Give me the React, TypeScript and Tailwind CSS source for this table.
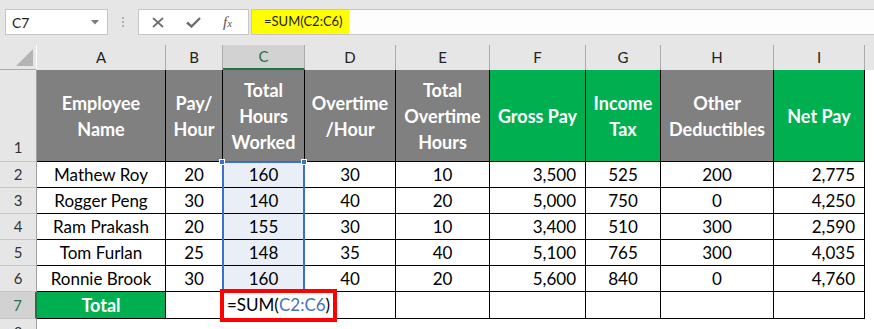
import React from 'react';

const headerCells = [
  { label: ['Employee', 'Name'], bg: 'bg-[#808080]' },
  { label: ['Pay/', 'Hour'], bg: 'bg-[#808080]' },
  { label: ['Total', 'Hours', 'Worked'], bg: 'bg-[#808080]' },
  { label: ['Overtime', '/Hour'], bg: 'bg-[#808080]' },
  { label: ['Total', 'Overtime', 'Hours'], bg: 'bg-[#808080]' },
  { label: ['Gross Pay'], bg: 'bg-[#00b050]' },
  { label: ['Income', 'Tax'], bg: 'bg-[#00b050]' },
  { label: ['Other', 'Deductibles'], bg: 'bg-[#808080]' },
  { label: ['Net Pay'], bg: 'bg-[#00b050]' },
];

const rows = [
  ['Mathew Roy', '20', '160', '30', '10', '3,500', '525', '200', '2,775'],
  ['Rogger Peng', '30', '140', '40', '20', '5,000', '750', '0', '4,250'],
  ['Ram Prakash', '20', '155', '30', '10', '3,400', '510', '300', '2,590'],
  ['Tom Furlan', '25', '148', '35', '40', '5,100', '765', '300', '4,035'],
  ['Ronnie Brook', '30', '160', '40', '20', '5,600', '840', '0', '4,760'],
];

const letters = ['A', 'B', 'C', 'D', 'E', 'F', 'G', 'H', 'I'];

const FormulaBar: React.FC = () => (
  <div className="h-[45px] bg-[#e6e6e6] pt-[9px] flex items-start">
    <div className="ml-[5px] w-[103px] h-[26px] bg-white border border-[#c6c6c6] flex items-center justify-between pl-[6px] pr-[8px] text-[14px] text-[#222]">
      <span>C7</span>
      <svg width="8" height="5" viewBox="0 0 8 5">
        <path d="M0 0 L8 0 L4 4.5 Z" fill="#7a7a7a" />
      </svg>
    </div>
    <div className="w-[30px] h-[26px] flex flex-col items-center justify-center gap-[2px]">
      <span className="w-[2px] h-[2px] bg-[#b0b0b0]" />
      <span className="w-[2px] h-[2px] bg-[#b0b0b0]" />
      <span className="w-[2px] h-[2px] bg-[#b0b0b0]" />
    </div>
    <div className="w-[111px] h-[26px] bg-white border border-[#c6c6c6] flex items-center pl-[13px] gap-[22px]">
      <svg width="12" height="11" viewBox="0 0 12 11">
        <path d="M1 1 L11 10 M11 1 L1 10" stroke="#6e6e6e" strokeWidth="1.7" fill="none" />
      </svg>
      <svg width="15" height="11" viewBox="0 0 15 11">
        <path d="M1 5.5 L5.5 9.5 L14 1" stroke="#6e6e6e" strokeWidth="2.4" fill="none" />
      </svg>
      <span className="font-['Liberation_Serif',serif] italic text-[15px] text-[#555] leading-none">
        f<span className="text-[11px]">x</span>
      </span>
    </div>
    <div className="ml-[2px] flex-1 h-[26px] bg-[#fdfdfd] border-y border-l border-[#c6c6c6] flex">
      <div className="w-[97px] h-full bg-[#ffff00] pl-[12px] flex items-center text-[13px] text-[#222]">
        =SUM(C2:C6)
      </div>
    </div>
  </div>
);

const App: React.FC = () => {
  return (
    <div className="w-[874px] h-[329px] overflow-hidden bg-white font-['Lato','Noto_Sans',sans-serif]">
      <FormulaBar />
      <div className="relative grid grid-cols-[37px_129px_57px_82px_91px_94px_96px_75px_113px_91px_1fr] grid-rows-[25px_92px_26px_26px_26px_26px_26px_27px_11px] text-[17px]">
        {/* column headers */}
        <div className="bg-[#e6e6e6] border-r border-white border-b border-b-[#ababab] relative">
          <svg className="absolute left-[16px] top-[4px]" width="17" height="17" viewBox="0 0 17 17">
            <path d="M17 0 L17 17 L0 17 Z" fill="#b4b4b4" />
          </svg>
        </div>
        {letters.map((l) =>
          l === 'C' ? (
            <div key={l} className="bg-[#d2d2d2] border-r border-[#ababab] border-b-2 border-b-[#217346] flex items-center justify-center text-[#217346] text-[15px]">
              {l}
            </div>
          ) : (
            <div key={l} className="bg-[#e6e6e6] border-r border-[#ababab] flex items-center justify-center text-[#222] text-[15px]">
              {l}
            </div>
          )
        )}
        <div className="bg-[#e6e6e6]" />

        {/* row 1 */}
        <div className="bg-[#e6e6e6] border-r border-[#9f9f9f] border-b border-b-[#c6c6c6] flex items-end justify-center pb-[3px] text-[15px] text-[#333]">
          1
        </div>
        {headerCells.map((h, i) => (
          <div
            key={i}
            className={`${h.bg} border-r border-b border-black flex flex-col items-center justify-center text-white font-bold text-[18px] leading-[26px] text-center`}
          >
            {h.label.map((t) => (
              <span key={t}>{t}</span>
            ))}
          </div>
        ))}
        <div className="bg-white" />

        {/* data rows */}
        {rows.map((r, ri) => (
          <React.Fragment key={ri}>
            <div className="bg-[#e6e6e6] border-r border-[#9f9f9f] border-b border-b-[#c6c6c6] flex items-center justify-center text-[15px] text-[#333]">
              {ri + 2}
            </div>
            {r.map((v, ci) => (
              <div
                key={ci}
                className={`border-r border-b border-black flex items-center text-black ${
                  ci === 5 || ci === 8 ? 'justify-end pr-[9px]' : 'justify-center'
                } ${ci === 2 ? 'bg-[#e9eef7]' : 'bg-white'}`}
              >
                {v}
              </div>
            ))}
            <div className="bg-white" />
          </React.Fragment>
        ))}

        {/* row 7 */}
        <div className="bg-[#d2d2d2] border-r-2 border-[#217346] border-b border-b-[#c6c6c6] flex items-center justify-center text-[15px] text-[#217346]">
          7
        </div>
        <div className="bg-[#00b050] border-r border-b border-black flex items-center justify-center text-white font-bold text-[18px]">
          Total
        </div>
        <div className="border-r border-b border-black" />
        <div className="border-b border-black flex items-center pl-[4px] whitespace-nowrap overflow-visible z-10 text-black">
          =SUM(<span className="text-[#4472c4]">C2:C6</span>)
        </div>
        <div className="border-r border-b border-black" />
        <div className="border-r border-b border-black" />
        <div className="border-r border-b border-black" />
        <div className="border-r border-b border-black" />
        <div className="border-r border-b border-black" />
        <div className="border-r border-b border-black" />
        <div className="bg-white" />

        {/* row 8 */}
        <div className="bg-[#e6e6e6] border-r border-[#9f9f9f] flex items-start justify-center pt-[6px] text-[15px] text-[#333] leading-none overflow-hidden">
          8
        </div>
        <div className="col-span-10 bg-white" />

        {/* formula reference range C2:C6 */}
        <div className="absolute left-[222px] top-[116px] w-[83px] h-[130px] border-2 border-[#3a6fcb] pointer-events-none" />
        <div className="absolute left-[219px] top-[114px] w-[6px] h-[6px] bg-[#3a6fcb] border border-white" />
        <div className="absolute left-[301px] top-[114px] w-[6px] h-[6px] bg-[#3a6fcb] border border-white" />

        {/* annotation box around C7 */}
        <div className="absolute left-[220px] top-[244px] w-[117px] h-[33px] border-4 border-[#ff0000] pointer-events-none z-20" />
      </div>
    </div>
  );
};

export default App;
